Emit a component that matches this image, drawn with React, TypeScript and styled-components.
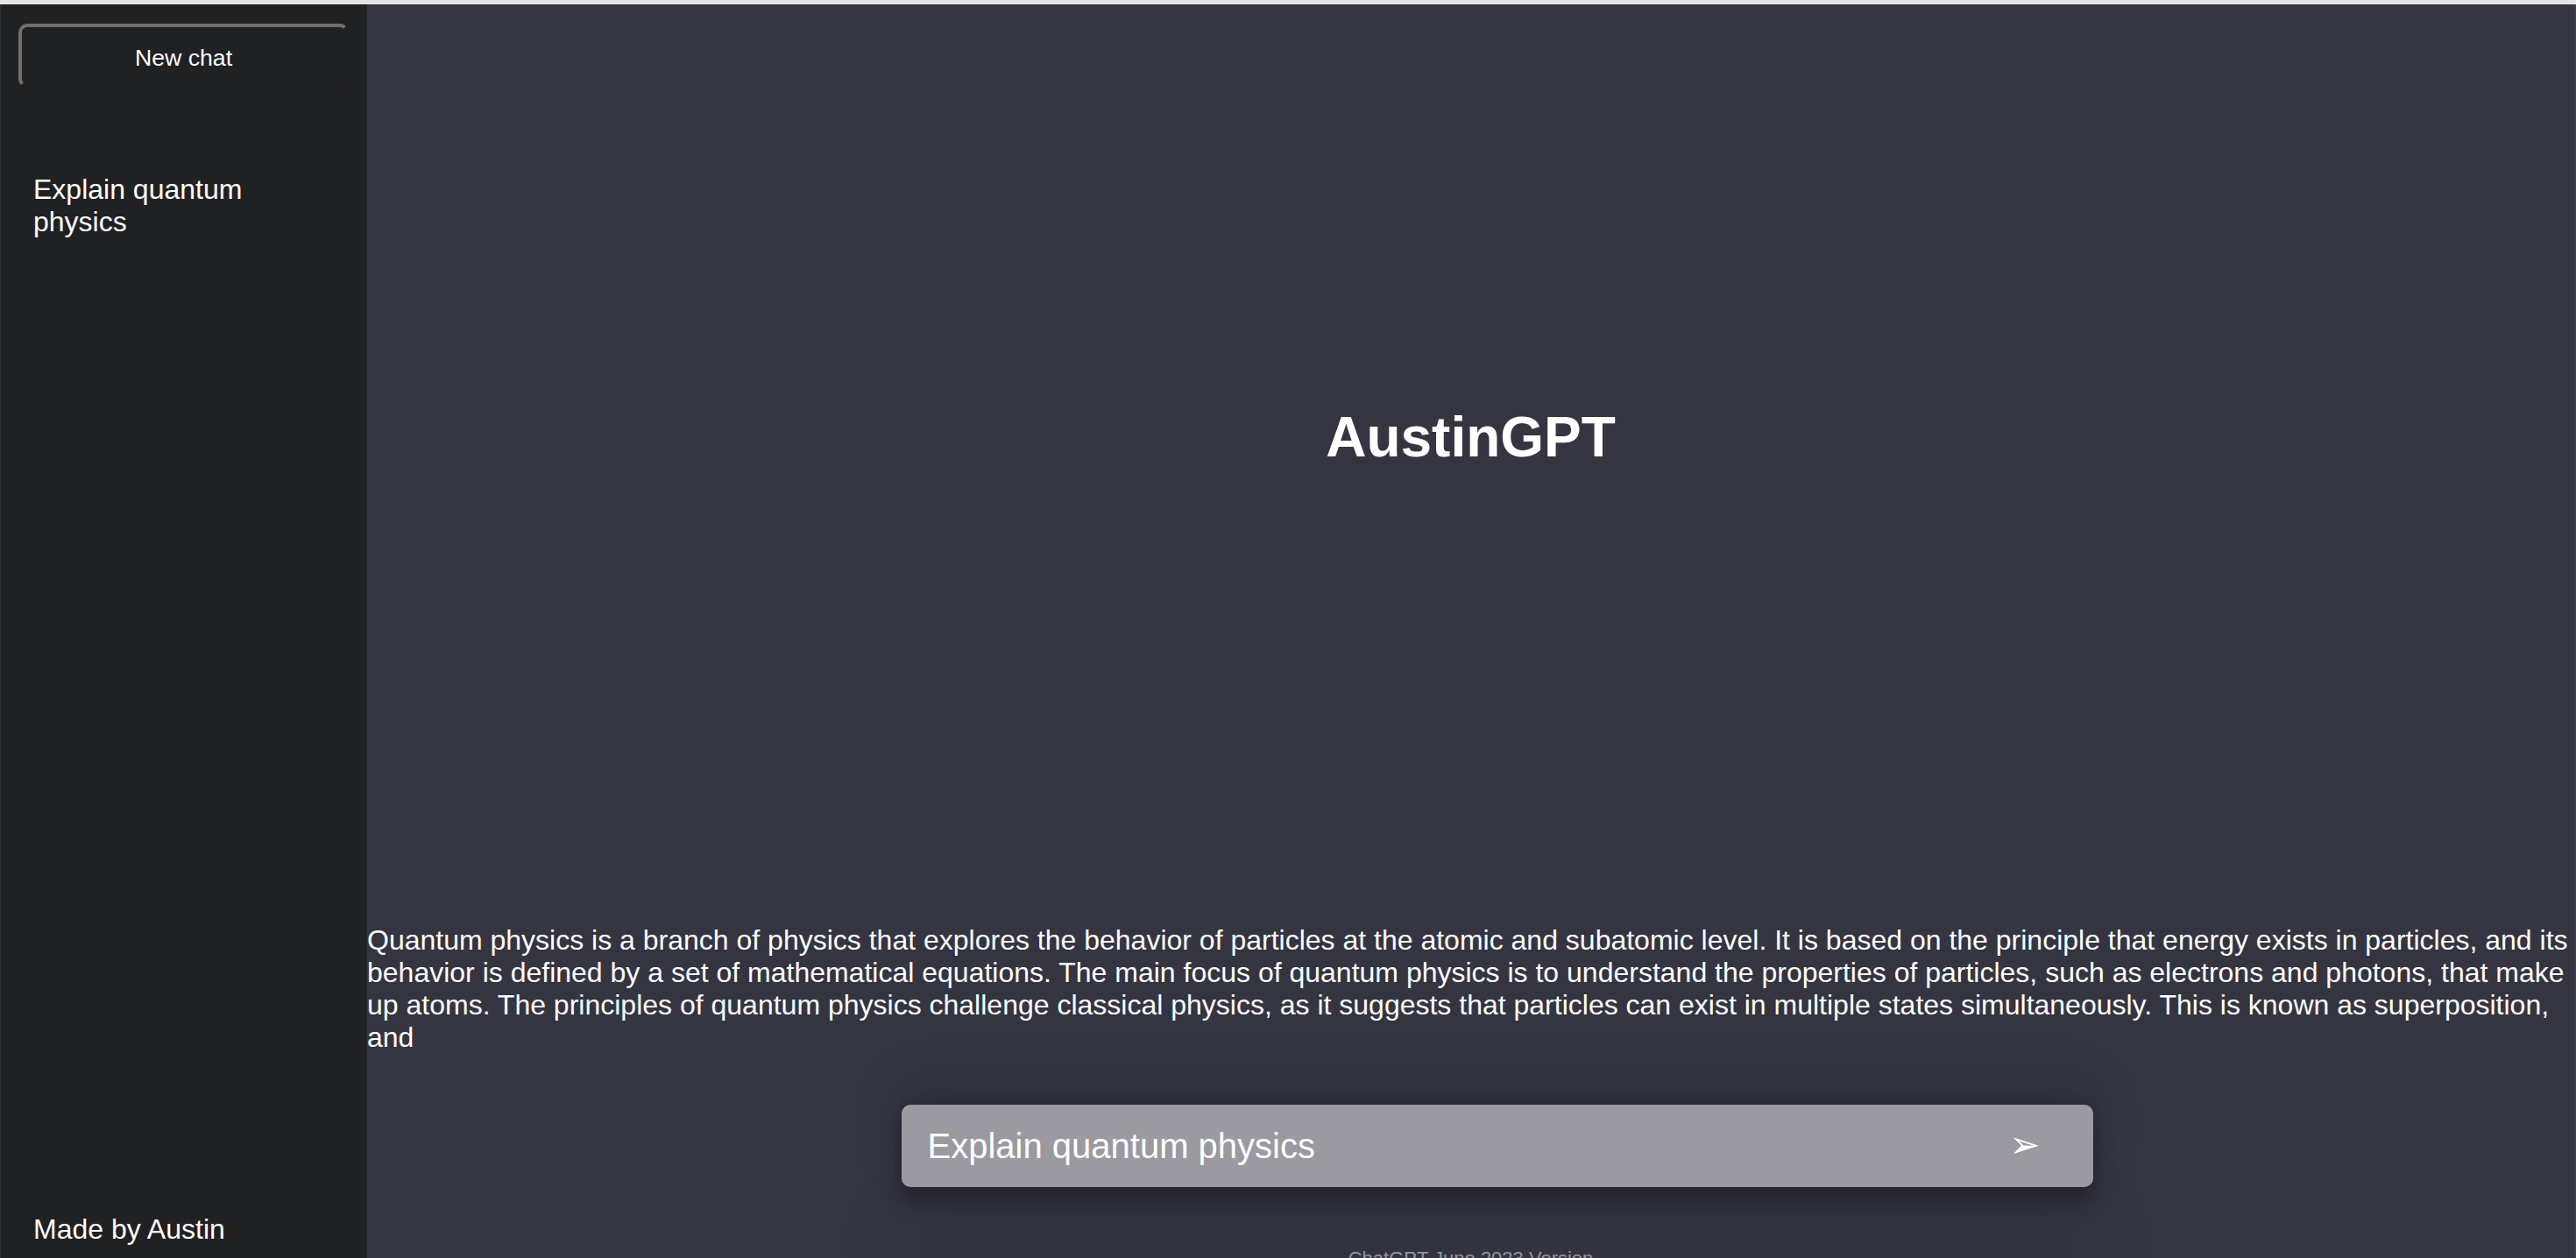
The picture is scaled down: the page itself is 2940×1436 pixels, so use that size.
import React from "react";
import styled, { createGlobalStyle } from "styled-components";

const GlobalStyle = createGlobalStyle`
  html, body {
    margin: 0;
    padding: 0;
    height: 100%;
    overflow: hidden;
  }
  body {
    background: #e4e4e4;
    color: #ffffff;
    font-family: "Liberation Sans", Arial, Helvetica, sans-serif;
  }
  *, *::before, *::after {
    box-sizing: border-box;
  }
`;

const Shell = styled.div`
  display: flex;
  height: 100vh;
  padding-top: 5px;
  overflow: hidden;
`;

const Sidebar = styled.aside`
  width: 419px;
  flex-shrink: 0;
  background: #202123;
  border-left: 1px solid #2c2d30;
  display: flex;
  flex-direction: column;
`;

const NewChatButton = styled.button`
  margin: 22px 21px 0 20px;
  padding: 20px 10px 14px;
  border: 4px solid;
  border-color: #6f6f70 #202123 #202123 #6f6f70;
  border-radius: 10px;
  background: transparent;
  color: #ffffff;
  font-family: "Liberation Sans", Arial, Helvetica, sans-serif;
  font-size: 26.67px;
  line-height: normal;
  text-align: center;
  cursor: pointer;
`;

const History = styled.ul`
  list-style: none;
  margin: 0;
  padding: 98px 37px 0;
`;

const HistoryItem = styled.li`
  font-size: 32px;
  line-height: normal;
  color: #ffffff;
  cursor: pointer;
`;

const Nav = styled.nav`
  margin-top: auto;
  padding: 0 37px 14px;
  font-size: 32px;
  line-height: normal;
  color: #ffffff;
`;

const Main = styled.main`
  flex: 1;
  min-width: 0;
  background: #343541;
  border-right: 2px solid #3c3c48;
  display: flex;
  flex-direction: column;
  align-items: center;
  overflow: hidden;
`;

const Title = styled.h1`
  margin: 457px 0 0;
  font-size: 64px;
  font-weight: 700;
  line-height: normal;
  color: #ffffff;
`;

const Feed = styled.p`
  margin: 519px 0 0;
  width: 100%;
  font-size: 32px;
  line-height: normal;
  text-align: left;
  color: #ffffff;
`;

const InputContainer = styled.div`
  position: relative;
  width: 1300px;
  margin-top: 58px;
  flex-shrink: 0;
`;

const PromptBox = styled.div`
  box-sizing: content-box;
  width: 100%;
  height: 46px;
  padding: 24px 30px;
  border-radius: 10px;
  background: rgba(255, 255, 255, 0.5);
  color: #ffffff;
  font-size: 40px;
  line-height: 46px;
  white-space: nowrap;
  box-shadow: rgba(0, 0, 0, 0.05) 0 108px 110px, rgba(0, 0, 0, 0.12) 0 -24px 60px,
    rgba(0, 0, 0, 0.12) 0 8px 12px, rgba(0, 0, 0, 0.17) 0 24px 26px,
    rgba(0, 0, 0, 0.09) 0 -6px 10px;
`;

const Submit = styled.div`
  position: absolute;
  right: 0;
  bottom: 24px;
  font-family: "DejaVu Sans", sans-serif;
  font-size: 42px;
  line-height: normal;
  color: #ffffff;
  cursor: pointer;
`;

const Info = styled.p`
  margin: 69px 0 0;
  font-size: 22px;
  line-height: normal;
  color: rgba(255, 255, 255, 0.5);
  text-align: center;
  flex-shrink: 0;
`;

export default function App() {
  return (
    <>
      <GlobalStyle />
      <Shell>
        <Sidebar>
          <NewChatButton>New chat</NewChatButton>
          <History>
            <HistoryItem>Explain quantum physics</HistoryItem>
          </History>
          <Nav>Made by Austin</Nav>
        </Sidebar>
        <Main>
          <Title>AustinGPT</Title>
          <Feed>
            Quantum physics is a branch of physics that explores the behavior of particles at the
            atomic and subatomic level. It is based on the principle that energy exists in particles,
            and its behavior is defined by a set of mathematical equations. The main focus of quantum
            physics is to understand the properties of particles, such as electrons and photons, that
            make up atoms. The principles of quantum physics challenge classical physics, as it
            suggests that particles can exist in multiple states simultaneously. This is known as
            superposition, and
          </Feed>
          <InputContainer>
            <PromptBox>Explain quantum physics</PromptBox>
            <Submit>➢</Submit>
          </InputContainer>
          <Info>ChatGPT June 2023 Version</Info>
        </Main>
      </Shell>
    </>
  );
}
